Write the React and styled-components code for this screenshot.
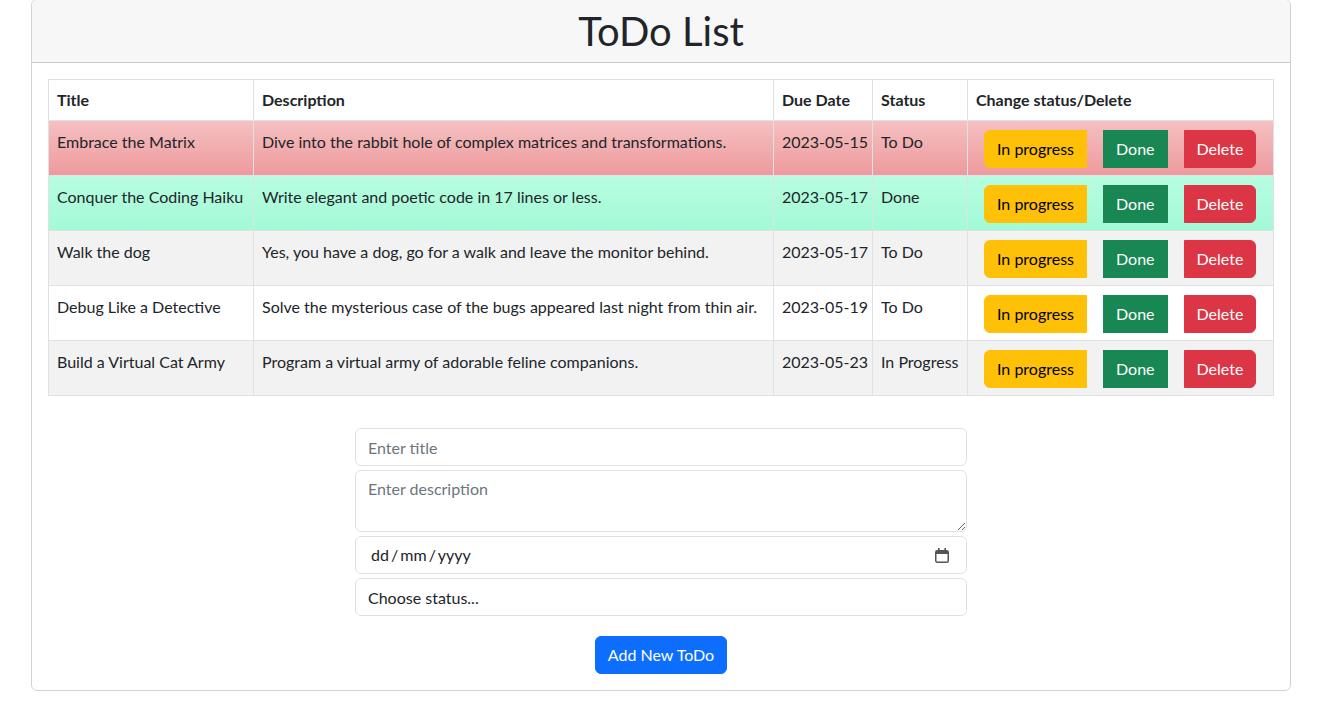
import React from "react";
import styled, { createGlobalStyle } from "styled-components";

const GlobalStyle = createGlobalStyle`
  body {
    margin: 0;
    background: #ffffff;
    font-family: "Segoe UI", Lato, "Noto Sans", sans-serif;
    font-size: 16px;
    line-height: 1.5;
    color: #212529;
  }
  * { box-sizing: border-box; }
`;

const Card = styled.div`
  width: 1260px;
  margin: -1px 0 0 31px;
  border: 1px solid rgba(0, 0, 0, 0.175);
  border-radius: 6px;
  overflow: hidden;
`;

const CardHeader = styled.div`
  background: #f7f7f7;
  border-bottom: 1px solid rgba(0, 0, 0, 0.175);
  padding: 8px 16px;
  text-align: center;
`;

const Title = styled.h1`
  margin: 0;
  font-size: 40px;
  font-weight: 400;
  line-height: 46px;
  color: #212529;
`;

const CardBody = styled.div`
  padding: 16px;
`;

const Table = styled.table`
  width: 100%;
  table-layout: fixed;
  border-collapse: collapse;
  margin-bottom: 32px;
`;

const Th = styled.th`
  width: ${(p) => p.$w}px;
  text-align: left;
  font-weight: 700;
  padding: 8px;
  border: 1px solid #dee2e6;
  vertical-align: bottom;
  height: 41px;
`;

const Row = styled.tr`
  background: ${(p) =>
    p.$tone === "red"
      ? "linear-gradient(#f5c0c1, #ee999c)"
      : p.$tone === "green"
      ? "linear-gradient(#b8fde1, #a2fad5)"
      : p.$tone === "gray"
      ? "#f2f2f2"
      : "#ffffff"};
`;

const Td = styled.td`
  padding: 9px 8px 7px;
  border: 1px solid #dee2e6;
  vertical-align: top;
  white-space: nowrap;
`;

const BtnGroup = styled.div`
  display: flex;
`;

const Btn = styled.button`
  font-family: inherit;
  font-size: 16px;
  line-height: 24px;
  height: 38px;
  padding: 6px 12px;
  margin: 0 8px;
  border: 1px solid ${(p) => p.$bg};
  background: ${(p) => p.$bg};
  color: ${(p) => p.$fg};
  border-radius: ${(p) => p.$radius};
  cursor: pointer;
`;

const Form = styled.form`
  width: 612px;
  margin: 0 auto;
  display: flex;
  flex-direction: column;
  gap: 4px;
`;

const Input = styled.input`
  font-family: inherit;
  font-size: 16px;
  line-height: 24px;
  height: 38px;
  padding: 6px 12px;
  border: 1px solid #dee2e6;
  border-radius: 6px;
  color: #212529;
  &::placeholder { color: #6c757d; }
`;

const TextArea = styled.textarea`
  font-family: inherit;
  font-size: 16px;
  line-height: 24px;
  height: 62px;
  padding: 6px 12px;
  border: 1px solid #dee2e6;
  border-radius: 6px;
  color: #212529;
  &::placeholder { color: #6c757d; }
`;

const DateField = styled.div`
  height: 38px;
  padding: 6px 16px 6px 15px;
  border: 1px solid #dee2e6;
  border-radius: 6px;
  display: flex;
  align-items: center;
  justify-content: space-between;
  color: #212529;
  word-spacing: -2px;
`;

const Select = styled.select`
  appearance: none;
  font-family: inherit;
  font-size: 16px;
  height: 38px;
  padding: 6px 12px;
  border: 1px solid #dee2e6;
  border-radius: 6px;
  background: #ffffff;
  color: #212529;
`;

const SubmitRow = styled.div`
  display: flex;
  justify-content: center;
  margin-top: 16px;
`;

const PrimaryBtn = styled.button`
  font-family: inherit;
  font-size: 16px;
  line-height: 24px;
  height: 38px;
  padding: 6px 12px;
  border: 1px solid #0d6efd;
  background: #0d6efd;
  color: #ffffff;
  border-radius: 6px;
`;

const todos = [
  { title: "Embrace the Matrix", desc: "Dive into the rabbit hole of complex matrices and transformations.", due: "2023-05-15", status: "To Do", tone: "red" },
  { title: "Conquer the Coding Haiku", desc: "Write elegant and poetic code in 17 lines or less.", due: "2023-05-17", status: "Done", tone: "green" },
  { title: "Walk the dog", desc: "Yes, you have a dog, go for a walk and leave the monitor behind.", due: "2023-05-17", status: "To Do", tone: "gray" },
  { title: "Debug Like a Detective", desc: "Solve the mysterious case of the bugs appeared last night from thin air.", due: "2023-05-19", status: "To Do", tone: "white" },
  { title: "Build a Virtual Cat Army", desc: "Program a virtual army of adorable feline companions.", due: "2023-05-23", status: "In Progress", tone: "gray" },
];

const CalendarIcon = () => (
  <svg width="16" height="17" viewBox="0 0 16 17" fill="none">
    <rect x="1.75" y="3.75" width="12.5" height="11.5" rx="1.5" stroke="#555" strokeWidth="1.5" />
    <rect x="2" y="4" width="12" height="3" fill="#555" />
    <rect x="4" y="1" width="1.6" height="3.5" fill="#555" />
    <rect x="10.4" y="1" width="1.6" height="3.5" fill="#555" />
  </svg>
);

export default function App() {
  return (
    <>
      <GlobalStyle />
      <Card>
        <CardHeader>
          <Title>ToDo List</Title>
        </CardHeader>
        <CardBody>
          <Table>
            <thead>
              <tr>
                <Th $w={205}>Title</Th>
                <Th $w={520}>Description</Th>
                <Th $w={99}>Due Date</Th>
                <Th $w={95}>Status</Th>
                <Th>Change status/Delete</Th>
              </tr>
            </thead>
            <tbody>
              {todos.map((t) => (
                <Row key={t.title} $tone={t.tone}>
                  <Td>{t.title}</Td>
                  <Td>{t.desc}</Td>
                  <Td>{t.due}</Td>
                  <Td>{t.status}</Td>
                  <Td>
                    <BtnGroup>
                      <Btn $bg="#ffc107" $fg="#000000" $radius="6px 0 0 6px">In progress</Btn>
                      <Btn $bg="#198754" $fg="#ffffff" $radius="0">Done</Btn>
                      <Btn $bg="#dc3545" $fg="#ffffff" $radius="0 6px 6px 0">Delete</Btn>
                    </BtnGroup>
                  </Td>
                </Row>
              ))}
            </tbody>
          </Table>
          <Form onSubmit={(e) => e.preventDefault()}>
            <Input placeholder="Enter title" />
            <TextArea placeholder="Enter description" />
            <DateField>
              <span>dd / mm / yyyy</span>
              <CalendarIcon />
            </DateField>
            <Select defaultValue="">
              <option value="">Choose status...</option>
              <option>To Do</option>
              <option>In Progress</option>
              <option>Done</option>
            </Select>
            <SubmitRow>
              <PrimaryBtn type="submit">Add New ToDo</PrimaryBtn>
            </SubmitRow>
          </Form>
        </CardBody>
      </Card>
    </>
  );
}
